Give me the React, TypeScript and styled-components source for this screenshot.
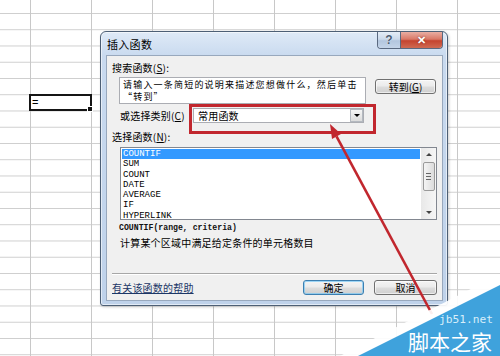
import React from 'react';
import styled, { createGlobalStyle } from 'styled-components';

const CJK = `"Noto Sans CJK SC", "Noto Sans", sans-serif`;
const MONO = `"Liberation Mono", "DejaVu Sans Mono", monospace`;

const GlobalStyle = createGlobalStyle`
  html, body {
    margin: 0;
    padding: 0;
    background: #fff;
  }
  body {
    font-family: ${CJK};
    overflow: hidden;
  }
`;

// spreadsheet behind the dialog
const Sheet = styled.div`
  position: relative;
  width: 500px;
  height: 356px;
  overflow: hidden;
  background-color: #fff;
  background-image:
    linear-gradient(to right, #c8c8c8 1px, transparent 1px),
    linear-gradient(to bottom, #cecece 1px, transparent 1px);
  background-size: 61px 100%, 100% 16.25px;
  background-position: 30px 0, 0 13px;
`;

const ActiveCell = styled.div`
  position: absolute;
  left: 29px;
  top: 94px;
  width: 63px;
  height: 17px;
  box-sizing: border-box;
  border: 2px solid #151515;
  font-family: "Liberation Sans", sans-serif;
  font-size: 11px;
  line-height: 13px;
  padding-left: 1px;
  color: #000;
`;

const FillHandle = styled.span`
  position: absolute;
  right: -3px;
  bottom: -3px;
  width: 4px;
  height: 4px;
  background: #151515;
  border: 1px solid #fff;
`;

// dialog window
const Dialog = styled.div`
  position: absolute;
  left: 100px;
  top: 31px;
  width: 348px;
  height: 275px;
  box-sizing: border-box;
  border: 1px solid #4d5f75;
  border-radius: 6px 6px 3px 3px;
  background: linear-gradient(to bottom, #dfeaf7 0px, #c9daef 24px, #bfd2ea 100%);
  box-shadow: inset 0 0 0 1px rgba(255, 255, 255, 0.55), 1px 1px 3px rgba(0, 0, 0, 0.2);
  padding: 0 4px 4px 5px;
  display: flex;
  flex-direction: column;
`;

const TitleBar = styled.div`
  height: 23px;
  flex: 0 0 23px;
  display: flex;
  align-items: center;
  padding-left: 1px;
`;

const TitleText = styled.span`
  font-size: 11px;
  color: #000;
  letter-spacing: 0.3px;
`;

const CaptionButtons = styled.div`
  margin-left: auto;
  align-self: flex-start;
  display: flex;
  border: 1px solid #5a6980;
  border-top: none;
  border-radius: 0 0 4px 4px;
  overflow: hidden;
  height: 16px;
`;

const CaptionButton = styled.div<{ $close?: boolean }>`
  width: ${(p) => (p.$close ? 41 : 22)}px;
  display: flex;
  align-items: center;
  justify-content: center;
  font-family: "Liberation Sans", sans-serif;
  font-weight: bold;
  font-size: ${(p) => (p.$close ? 11 : 12)}px;
  color: ${(p) => (p.$close ? '#fff' : '#4b5c72')};
  text-shadow: ${(p) => (p.$close ? '0 0 2px #7a2418' : '0 0 1px #fff')};
  background: ${(p) =>
    p.$close
      ? 'linear-gradient(to bottom, #e9aea3 0%, #d97867 45%, #c5442f 55%, #cf6a52 100%)'
      : 'linear-gradient(to bottom, #e4edf7 0%, #cbd9ea 45%, #b3c6de 55%, #c4d4e8 100%)'};
  border-left: ${(p) => (p.$close ? '1px solid #5a6980' : 'none')};
`;

const Client = styled.div`
  flex: 1;
  background: #f0f0f0;
  border: 1px solid #98a8bd;
  display: flex;
  flex-direction: column;
  padding: 0 5px 4px 5px;
  min-height: 0;
`;

const Label = styled.div<{ $top: number; $indent?: number }>`
  margin-top: ${(p) => p.$top}px;
  margin-left: ${(p) => p.$indent || 0}px;
  font-size: 10px;
  line-height: 14px;
  color: #000;
  white-space: nowrap;
  letter-spacing: 0.2px;
`;

const SearchRow = styled.div`
  display: flex;
  align-items: flex-start;
  margin-top: 2px;
  padding-left: 7px;
`;

const SearchBox = styled.div`
  width: 247px;
  height: 27px;
  box-sizing: border-box;
  border: 1px solid #abadb3;
  background: #fff;
  padding: 0 0 0 3px;
  overflow: hidden;
`;

const SearchLine = styled.div`
  font-size: 9px;
  line-height: 13px;
  height: 12px;
  letter-spacing: 1.2px;
  color: #000;
  white-space: nowrap;
`;

const Button = styled.div<{ $width: number; $primary?: boolean }>`
  width: ${(p) => p.$width}px;
  height: 15px;
  box-sizing: border-box;
  border: 1px solid ${(p) => (p.$primary ? '#3c7fb1' : '#707070')};
  border-radius: 3px;
  background: linear-gradient(to bottom, #f4f4f4 0%, #ebebeb 48%, #dddddd 52%, #cfcfcf 100%);
  box-shadow: inset 0 0 0 1px ${(p) => (p.$primary ? 'rgba(120, 200, 245, 0.7)' : 'rgba(255, 255, 255, 0.6)')};
  font-size: 10px;
  line-height: 13px;
  text-align: center;
  color: #000;
  white-space: nowrap;
`;

const GoButton = styled(Button)`
  margin-left: 9px;
  margin-top: 2px;
`;

const CategoryRow = styled.div`
  display: flex;
  align-items: center;
  margin-top: 4px;
  padding-left: 8px;
  height: 15px;
`;

const CategoryLabel = styled.span`
  width: 73px;
  font-size: 10px;
  line-height: 14px;
  letter-spacing: 0.2px;
  white-space: nowrap;
`;

const Combo = styled.div`
  width: 171px;
  height: 15px;
  box-sizing: border-box;
  border: 1px solid #abadb3;
  background: #fff;
  display: flex;
  align-items: center;
  padding-left: 4px;
  font-size: 10px;
  letter-spacing: 0.2px;
`;

const ComboArrow = styled.div`
  margin-left: auto;
  width: 13px;
  height: 13px;
  box-sizing: border-box;
  border: 1px solid #b4b9c0;
  background: linear-gradient(to bottom, #f5f5f5, #dcdcdc);
  display: flex;
  align-items: center;
  justify-content: center;

  &::after {
    content: '';
    border-left: 3px solid transparent;
    border-right: 3px solid transparent;
    border-top: 3px solid #000;
  }
`;

const ListBox = styled.div`
  margin-top: 3px;
  margin-left: 8px;
  width: 317px;
  height: 73px;
  box-sizing: border-box;
  border: 1px solid #828790;
  background: #fff;
  display: flex;
`;

const ListItems = styled.div`
  flex: 1;
  padding: 1px 1px 0 1px;
`;

const ListItem = styled.div<{ $selected?: boolean }>`
  font-family: ${MONO};
  font-size: 9px;
  line-height: 10.3px;
  height: 10.3px;
  padding-left: 1px;
  color: ${(p) => (p.$selected ? '#fff' : '#000')};
  background: ${(p) => (p.$selected ? '#3399ff' : 'transparent')};
`;

const ScrollBar = styled.div`
  width: 15px;
  background: linear-gradient(to right, #e8e8e8, #f6f6f6);
  display: flex;
  flex-direction: column;
  align-items: center;
`;

const ScrollArrow = styled.div<{ $down?: boolean }>`
  height: 13px;
  display: flex;
  align-items: center;
  justify-content: center;

  &::after {
    content: '';
    border-left: 3px solid transparent;
    border-right: 3px solid transparent;
    ${(p) => (p.$down ? 'border-top: 3px solid #444;' : 'border-bottom: 3px solid #444;')}
  }
`;

const ScrollThumb = styled.div`
  margin-top: 1px;
  width: 12px;
  height: 29px;
  box-sizing: border-box;
  border: 1px solid #9a9a9a;
  border-radius: 2px;
  background: linear-gradient(to right, #f4f4f4, #dcdcdc);
  display: flex;
  flex-direction: column;
  align-items: center;
  justify-content: center;
  gap: 2px;
`;

const Grip = styled.span`
  width: 5px;
  height: 1px;
  background: #666;
`;

const ScrollSpacer = styled.div`
  flex: 1;
`;

const Syntax = styled.div`
  margin-top: 1px;
  margin-left: 7px;
  font-family: ${MONO};
  font-weight: bold;
  font-size: 8.2px;
  line-height: 14px;
  color: #111;
  white-space: nowrap;
`;

const Separator = styled.div`
  margin-top: 23px;
  border-top: 1px solid #a7a7a7;
  border-bottom: 1px solid #fff;
`;

const Footer = styled.div`
  margin-top: 5px;
  display: flex;
  align-items: center;
  height: 15px;
  gap: 10px;
`;

const HelpLink = styled.span`
  margin-right: auto;
  font-size: 10px;
  line-height: 14px;
  letter-spacing: 0.2px;
  color: #1c3767;
  text-decoration: underline;
`;

// annotation overlays
const Highlight = styled.div`
  position: absolute;
  left: 189px;
  top: 104px;
  width: 187px;
  height: 30px;
  box-sizing: border-box;
  border: 3px solid #c1272e;
`;

const Overlay = styled.svg`
  position: absolute;
  left: 0;
  top: 0;
  pointer-events: none;
`;

const functions = ['COUNTIF', 'SUM', 'COUNT', 'DATE', 'AVERAGE', 'IF', 'HYPERLINK'];

export default function App() {
  return (
    <>
      <GlobalStyle />
      <Sheet>
        <ActiveCell>
          =
          <FillHandle />
        </ActiveCell>

        <Dialog>
          <TitleBar>
            <TitleText>插入函数</TitleText>
            <CaptionButtons>
              <CaptionButton>?</CaptionButton>
              <CaptionButton $close>✕</CaptionButton>
            </CaptionButtons>
          </TitleBar>

          <Client>
            <Label $top={5}>
              搜索函数(<u>S</u>):
            </Label>
            <SearchRow>
              <SearchBox>
                <SearchLine>请输入一条简短的说明来描述您想做什么，然后单击</SearchLine>
                <SearchLine>“转到”</SearchLine>
              </SearchBox>
              <GoButton $width={61}>
                转到(<u>G</u>)
              </GoButton>
            </SearchRow>

            <CategoryRow>
              <CategoryLabel>
                或选择类别(<u>C</u>)
              </CategoryLabel>
              <Combo>
                常用函数
                <ComboArrow />
              </Combo>
            </CategoryRow>

            <Label $top={7}>
              选择函数(<u>N</u>):
            </Label>
            <ListBox>
              <ListItems>
                {functions.map((name, i) => (
                  <ListItem key={name} $selected={i === 0}>
                    {name}
                  </ListItem>
                ))}
              </ListItems>
              <ScrollBar>
                <ScrollArrow />
                <ScrollThumb>
                  <Grip />
                  <Grip />
                  <Grip />
                </ScrollThumb>
                <ScrollSpacer />
                <ScrollArrow $down />
              </ScrollBar>
            </ListBox>

            <Syntax>COUNTIF(range, criteria)</Syntax>
            <Label $top={1} $indent={8}>
              计算某个区域中满足给定条件的单元格数目
            </Label>

            <Separator />
            <Footer>
              <HelpLink>有关该函数的帮助</HelpLink>
              <Button $width={61} $primary>
                确定
              </Button>
              <Button $width={63}>取消</Button>
            </Footer>
          </Client>
        </Dialog>

        <Highlight />

        <Overlay width={500} height={356} viewBox="0 0 500 356">
          <line x1={432} y1={314} x2={336.5} y2={136.4} stroke="#c1272e" strokeWidth={2.6} />
          <polygon points="330,124 341,134 332,139" fill="#c1272e" />
          <polygon points="340,356 500,274 500,356" fill="#ffffff" opacity={0.92} />
          <polygon points="358,356 500,285 500,356" fill="#3fa2dc" />
          <text x={439} y={322.5} fontFamily="DejaVu Sans Mono, monospace" fontSize={11.2} fill="#d8eefa">
            jb51.net
          </text>
          <text x={408} y={350} fontFamily="Noto Sans CJK SC, sans-serif" fontSize={21} fill="#ffffff">
            脚本之家
          </text>
        </Overlay>
      </Sheet>
    </>
  );
}
